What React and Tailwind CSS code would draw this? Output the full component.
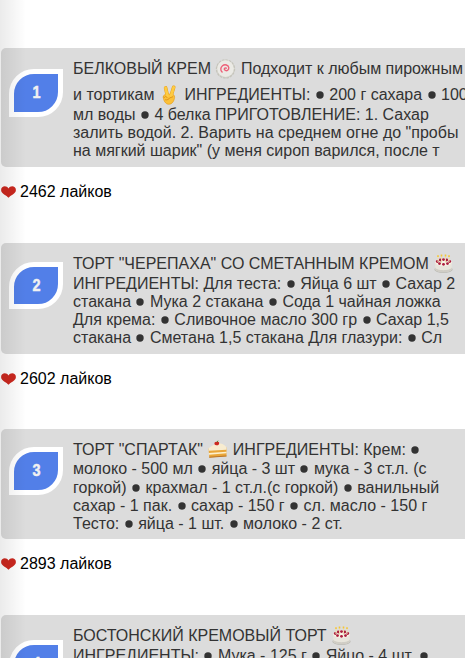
import React from 'react';

function Swirl() {
  return (
    <svg className="inline-block h-5 w-[21px] shrink-0" viewBox="0 0 20 20">
      <circle cx="10" cy="10" r="9" fill="#d3d2ca" stroke="#c6c5bc" strokeWidth="1.400" strokeDasharray="2.600 .9" />
      <circle cx="10" cy="9.600" r="8.300" fill="#ebeae5" />
      <path d="M10.800 9.200c-1.700-.9-2.600.9-1.500 1.900 1.600 1.400 4.300 0 4-2.400-.3-2.800-4-3.800-6.300-2-2.200 1.700-2.200 4.700-.4 6.400" fill="none" stroke="#ed6078" strokeWidth="1.400" strokeLinecap="round" />
    </svg>
  );
}

function Victory() {
  return (
    <svg className="inline-block h-5 w-[21px] shrink-0" viewBox="0 0 20 20">
      <g strokeLinecap="round" strokeLinejoin="round">
        <path d="M8 11 6.100 2.900M11.500 11 14.200 2.300" fill="none" stroke="#e39b1c" strokeWidth="3.600" />
        <path d="M3.800 12c0-2 1.600-2.700 3.600-2.900l5.600.1c2 .8 2.500 2.400 1.900 4.500-.7 3.200-2.700 5.600-5.500 5.600-3.300 0-5.600-3.600-5.600-7.300Z" fill="#fbc13a" stroke="#e39b1c" strokeWidth=".6" />
        <path d="M8 11 6.100 2.900M11.500 11 14.200 2.300" fill="none" stroke="#fecb42" strokeWidth="2.800" />
        <path d="M5 12.500c.5-1.700 2-1.600 2.600.2M6 14.800c2.200.4 3.300-.5 4-1.800l3.200-1.200" fill="none" stroke="#d98a14" strokeWidth=".8" />
      </g>
    </svg>
  );
}

function BirthdayCake() {
  return (
    <svg className="inline-block h-5 w-[21px] shrink-0" viewBox="0 0 20 20">
      <ellipse cx="10" cy="15.500" rx="9.200" ry="3.500" fill="#bdbcb6" />
      <path d="M1.800 8v6.800c0 4.400 16.400 4.400 16.400 0V8Z" fill="#e8e5dc" />
      <path d="M1.800 13.500c1 3.500 15.400 3.500 16.400 0v1.800c-1 4-15.400 4-16.400 0Z" fill="#d0cdc5" />
      <ellipse cx="10" cy="8.300" rx="8.200" ry="3.700" fill="#f6f1e4" />
      <g fill="#ab1c3c">
        <circle cx="3.800" cy="7.500" r="1.400" /><circle cx="6.800" cy="6" r="1.400" />
        <circle cx="10" cy="5.600" r="1.400" /><circle cx="13.200" cy="6" r="1.400" />
        <circle cx="16.200" cy="7.500" r="1.400" /><circle cx="6" cy="9.600" r="1.400" />
        <circle cx="10" cy="10.300" r="1.400" /><circle cx="14" cy="9.600" r="1.400" />
      </g>
      <path d="M4.500 8V3M8 8.500V2.500M12 8.500V2.500M15.500 8V3" stroke="#ecdcae" strokeWidth="1" />
      <path d="M4.500 3V1.300M8 2.500V.6M12 2.500V.6M15.500 3V1.300" stroke="#f5c637" strokeWidth="1.600" />
    </svg>
  );
}

function Shortcake() {
  return (
    <svg className="inline-block h-5 w-[21px] shrink-0" viewBox="0 0 20 20">
      <path d="M1 8.500 19 7.500v8.800L1.800 17.500Z" fill="#e9a63a" />
      <path d="M1 8.200 8 3.500c4-.6 9.500.6 11 4.200v2L1.200 10.800Z" fill="#f8ecd0" />
      <path d="M1.300 13 19 11.700v1.600L1.500 14.700Z" fill="#fdf0cd" />
      <path d="M1.600 16.700 19 15.400v1L1.800 17.800Z" fill="#b9752a" />
      <path d="M7 4.200c-.5-2 1.300-2.800 2.500-2.300 1.600-.8 2.900.9 1.800 2.500-.9 1.200-3.300 1.400-4.300-.2Z" fill="#cf2821" />
      <path d="M9.200 2.100 10.700.8" stroke="#55831e" strokeWidth="1" />
    </svg>
  );
}

function Heart() {
  return (
    <svg className="h-[12px] w-[15px] shrink-0" viewBox="0 0 15 12">
      <path d="M7.500 11.800C5.700 9.300.1 8 .1 4 .1-.3 5.700-1 7.500 2.500 9.300-1 14.900-.3 14.900 4c0 4-5.600 5.300-7.400 7.800Z" fill="#cc281f" />
    </svg>
  );
}

function Dot() {
  return (
    <span className="inline-block w-[10px] text-center leading-[18px]">
      <svg className="inline-block h-[8px] w-[8px] align-[1px]" viewBox="0 0 8 8"><circle cx="4" cy="4" r="3.700" fill="#333" /></svg>
    </span>
  );
}

function Line({ children, className = '' }) {
  return (
    <div className={`flex h-[18px] items-center whitespace-pre leading-[18px] ${className}`}>
      <span className="flex items-center whitespace-pre">
        {React.Children.map(children, (child) =>
          typeof child === 'string'
            ? child.split('●').map((part, i) => <React.Fragment key={i}>{i > 0 && <Dot />}<span>{part}</span></React.Fragment>)
            : child
        )}
      </span>
    </div>
  );
}

function Recipe({ number, card, badge, children }) {
  return (
    <section className={`ml-px flex w-[480px] shrink-0 items-start rounded-[5px] bg-[#dcdcdc] text-[#333] ${card}`}>
      <div className={`ml-2 flex w-[54px] shrink-0 items-center justify-center rounded-tl-[25px] rounded-br-[25px] border-[5px] border-white bg-[#527fe8] text-base font-bold text-[#f1f1f1] [-webkit-text-stroke:0.5px_#f1f1f1] ${badge}`}>
        <span className="inline-block scale-x-90">{number}</span>
      </div>
      <div className="ml-[10px] pt-3">{children}</div>
    </section>
  );
}

function Likes({ count, className }) {
  return (
    <div className={`ml-px flex h-[18px] shrink-0 items-center gap-1 leading-[18px] text-black ${className}`}>
      <Heart />
      <span>{count} лайков</span>
    </div>
  );
}

export default function App() {
  return (
    <main className="relative flex h-[658px] w-[465px] flex-col overflow-hidden bg-white pt-12 font-['Liberation_Sans',Arial,sans-serif] text-[16px]">
      <Recipe number="1" card="h-[119px]" badge="mt-[21px] h-[48px]">
        <Line>БЕЛКОВЫЙ КРЕМ <Swirl />{' Подходит к любым пирожным'}</Line>
        <Line className="mt-2">{'и тортикам '}<Victory />{' ИНГРЕДИЕНТЫ: ● 200 г сахара ● 100'}</Line>
        <Line className="mt-0.5">мл воды ● 4 белка ПРИГОТОВЛЕНИЕ: 1. Сахар</Line>
        <Line>залить водой. 2. Варить на среднем огне до "пробы</Line>
        <Line>на мягкий шарик" (у меня сироп варился, после т</Line>
      </Recipe>
      <Likes count="2462" className="mt-4" />
      <Recipe number="2" card="mt-[42px] h-[111px]" badge="mt-[19px] h-[47px]">
        <Line>{'ТОРТ "ЧЕРЕПАХА" СО СМЕТАННЫМ КРЕМОМ '}<BirthdayCake /></Line>
        <Line className="mt-0.5">ИНГРЕДИЕНТЫ: Для теста: ● Яйца 6 шт ● Сахар 2</Line>
        <Line>стакана ● Мука 2 стакана ● Сода 1 чайная ложка</Line>
        <Line>Для крема: ● Сливочное масло 300 гр ● Сахар 1,5</Line>
        <Line>стакана ● Сметана 1,5 стакана Для глазури: ● Сл</Line>
      </Recipe>
      <Likes count="2602" className="mt-4" />
      <Recipe number="3" card="mt-[41px] h-[110px]" badge="mt-[18px] h-[48px]">
        <Line>{'ТОРТ "СПАРТАК" '}<Shortcake />{' ИНГРЕДИЕНТЫ: Крем: ●'}</Line>
        <Line className="mt-px">молоко - 500 мл ● яйца - 3 шт ● мука - 3 ст.л. (с</Line>
        <Line className="mt-px">горкой) ● крахмал - 1 ст.л.(с горкой) ● ванильный</Line>
        <Line>сахар - 1 пак. ● сахар - 150 г ● сл. масло - 150 г</Line>
        <Line>Тесто: ● яйца - 1 шт. ● молоко - 2 ст.</Line>
      </Recipe>
      <Likes count="2893" className="mt-4" />
      <Recipe number="4" card="mt-[42px] h-[119px]" badge="mt-[25px] h-[48px]">
        <Line>{'БОСТОНСКИЙ КРЕМОВЫЙ ТОРТ '}<BirthdayCake /></Line>
        <Line className="mt-0.5">ИНГРЕДИЕНТЫ: ● Мука - 125 г ● Яйцо - 4 шт. ●</Line>
      </Recipe>
      <div className="pointer-events-none absolute inset-y-0 left-0 w-[26px] bg-linear-to-r from-black/8 to-transparent" />
    </main>
  );
}
